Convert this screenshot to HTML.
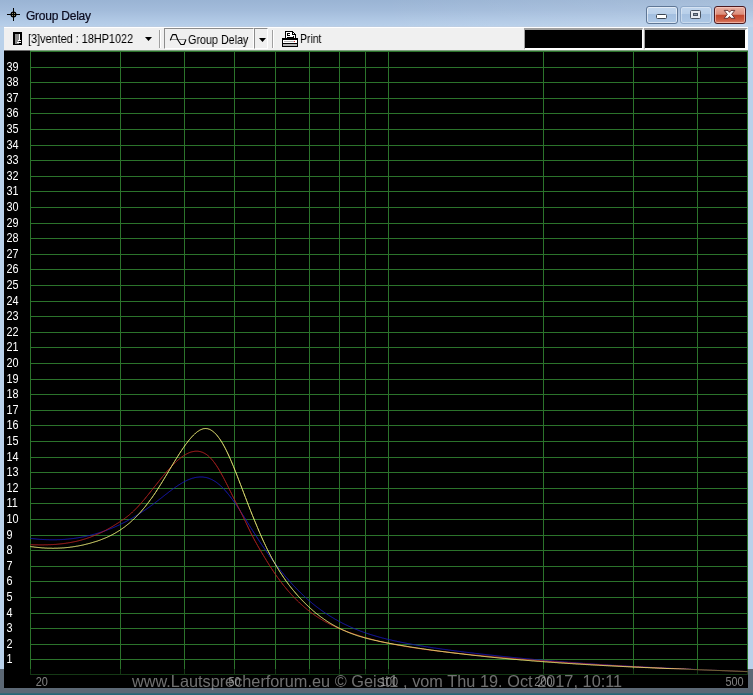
<!DOCTYPE html>
<html><head><meta charset="utf-8"><title>Group Delay</title>
<style>
html,body{margin:0;padding:0}
body{width:753px;height:695px;overflow:hidden;position:relative;background:#b9d1ea;font-family:"Liberation Sans",Arial,sans-serif}
.abs{position:absolute}
#chart,.tbt,#ttext,#wm{will-change:transform}
#title{left:0;top:0;width:753px;height:27px;background:linear-gradient(to bottom,#9ab4d4 0%,#a3bcdb 40%,#b2cae6 80%,#b8d0ea 100%)}
#titleglow{left:0;top:0;width:753px;height:27px;background:linear-gradient(to right,rgba(255,255,255,0) 0%,rgba(255,255,255,0.0) 50%,rgba(255,255,255,0.12) 100%)}
#ttext{left:26.2px;top:8.5px;font-size:12px;letter-spacing:-0.23px;line-height:14px;color:#0a0a1e;white-space:nowrap;-webkit-text-stroke:0.2px #0a0a1e}
#toolbar{left:4px;top:27px;width:744px;height:23px;background:#f0f0f0;border-top:1px solid #fff;box-sizing:border-box}
.tbt{font-size:12.4px;line-height:13px;color:#000;white-space:nowrap;transform:scaleX(0.877);transform-origin:left top}
.sepd{width:1px;height:18px;top:30px;background:#a0a0a0}
.sepl{width:1px;height:18px;top:30px;background:#fff}
.cb{top:6px;height:18px;box-sizing:border-box;border-radius:3px}
#band{left:0;top:669px;width:753px;height:26px;background:rgba(0,0,0,0.5)}
#teal{left:0;top:693px;width:753px;height:2px;background:linear-gradient(to bottom,#7ed2ee,#3cd0f0)}
#wm{left:131.5px;top:672px;font-size:16.28px;line-height:18px;color:rgba(170,170,170,0.66);white-space:nowrap;word-spacing:0.15px}
</style></head><body>
<div id="title" class="abs"></div><div class="abs" style="left:0;top:26px;width:753px;height:1px;background:#bccde3"></div><div id="titleglow" class="abs"></div>
<svg class="abs" style="left:6px;top:7px" width="16" height="16" viewBox="0 0 16 16"><g shape-rendering="crispEdges" fill="#000"><rect x="1" y="7" width="13" height="1"/><rect x="7" y="1" width="1" height="13"/></g><circle cx="7.5" cy="7.5" r="2.2" fill="none" stroke="#000" stroke-width="1.5"/><circle cx="7.5" cy="7.5" r="2.7" fill="#000"/><g fill="#b4ac80"><rect x="6.1" y="6.1" width="0.9" height="0.9"/><rect x="8" y="6.1" width="0.9" height="0.9"/><rect x="6.1" y="8" width="0.9" height="0.9"/><rect x="8" y="8" width="0.9" height="0.9"/></g></svg>
<div id="ttext" class="abs">Group Delay</div>
<!-- caption buttons -->
<div class="abs cb" style="left:646px;width:32px;border:1px solid #5f7796;background:linear-gradient(to bottom,#c3d7ee 0%,#bbd1ea 43%,#a3bfe0 47%,#adc7e5 100%);box-shadow:inset 0 0 0 1px rgba(255,255,255,0.55)"></div>
<div class="abs" style="left:656px;top:14px;width:11px;height:5px;box-sizing:border-box;border:1px solid #3c4652;background:#fff;border-radius:1.5px"></div>
<div class="abs cb" style="left:680px;width:32px;border:1px solid #8fa9c9;background:linear-gradient(to bottom,#c0d5ed 0%,#b8cfe9 43%,#a6c1e1 47%,#aec8e5 100%);box-shadow:inset 0 0 0 1px rgba(255,255,255,0.35)"></div>
<div class="abs" style="left:690px;top:10px;width:11px;height:9px;box-sizing:border-box;border:1px solid #4a5462;background:#e9ecf1;border-radius:1.5px"></div>
<div class="abs" style="left:693px;top:13px;width:5px;height:3px;box-sizing:border-box;border:1px solid #4a5462;background:#8d98a6"></div>
<div class="abs cb" style="left:714px;width:32px;border:1px solid #4b1a20;background:linear-gradient(to bottom,#e9b0a3 0%,#dc8e7b 46%,#c1442a 50%,#cc5a40 80%,#d9806a 100%);box-shadow:inset 0 0 0 1px rgba(255,210,200,0.6)"></div>
<svg class="abs" style="left:722px;top:8px" width="15" height="13" viewBox="0 0 15 13"><path d="M2.2 2.4 L6.0 2.4 L7.5 4.3 L9.0 2.4 L12.8 2.4 L9.7 6.3 L12.9 10.3 L9.0 10.3 L7.5 8.4 L6.0 10.3 L2.1 10.3 L5.3 6.3 Z" fill="#fff" stroke="#5a2a2a" stroke-width="0.9" stroke-linejoin="round"/></svg>
<!-- toolbar -->
<div id="toolbar" class="abs"></div>
<svg class="abs" style="left:13px;top:32px" width="9" height="13" viewBox="0 0 9 13" shape-rendering="crispEdges"><rect width="9" height="13" fill="#000"/><rect x="1.5" y="1.5" width="4" height="10" fill="#8a8a8a"/><rect x="6" y="1.5" width="1" height="7" fill="#fff"/><rect x="5" y="8" width="3" height="1" fill="#fff"/><rect x="4" y="10" width="4" height="1" fill="#fff"/></svg>
<div class="abs tbt" style="left:28.3px;top:33px" id="t1">[3]vented : 18HP1022</div>
<svg class="abs" style="left:145px;top:37px" width="7" height="4" viewBox="0 0 7 4"><path d="M0 0 H7 L3.5 4 Z" fill="#000"/></svg>
<div class="abs sepd" style="left:159px"></div><div class="abs sepl" style="left:160px"></div>
<!-- pressed button -->
<div class="abs" style="left:164px;top:28px;width:90px;height:21px;box-sizing:border-box;border-left:1px solid #8c8c8c;border-top:1px solid #8c8c8c;border-right:1px solid #fff;border-bottom:1px solid #fff"></div>
<div class="abs" style="left:254px;top:28px;width:14px;height:21px;box-sizing:border-box;border-left:1px solid #8c8c8c;border-top:1px solid #8c8c8c;border-right:1px solid #fff;border-bottom:1px solid #fff"></div>
<svg class="abs" style="left:169px;top:32px" width="19" height="15" viewBox="169 32 19 15"><rect x="170" y="39" width="16" height="1" fill="#8c8c8c" shape-rendering="crispEdges"/><path d="M170.4 40 L172.6 34.6 L176 34.6 L177.6 39.5 L180.9 44.5 L184 44.5 L185.8 40" fill="none" stroke="#000" stroke-width="1.1" stroke-linejoin="round" stroke-linecap="round"/></svg>
<div class="abs tbt" style="left:187.5px;top:34px;transform:scaleX(0.868)" id="t2">Group Delay</div>
<svg class="abs" style="left:259px;top:38px" width="7" height="4" viewBox="0 0 7 4"><path d="M0 0 H7 L3.5 4 Z" fill="#000"/></svg>
<div class="abs sepd" style="left:272px"></div><div class="abs sepl" style="left:273px"></div>
<!-- printer -->
<svg class="abs" style="left:282px;top:31px" width="16" height="16" viewBox="0 0 16 16" shape-rendering="crispEdges"><path d="M3.5 7.5 V0.5 H10.5 L13.5 3.5 V7.5" fill="#fff" stroke="#000"/><rect x="10" y="1" width="1" height="3" fill="#000"/><rect x="10" y="3" width="3" height="1" fill="#000"/><rect x="5" y="2" width="3" height="1" fill="#000"/><rect x="5" y="3" width="1" height="1" fill="#000"/><rect x="5" y="4" width="3" height="1" fill="#000"/><rect x="5" y="6" width="7" height="1" fill="#000"/><rect x="11" y="5" width="1" height="1" fill="#000"/><rect x="0.5" y="7.5" width="15" height="8" fill="#fff" stroke="#000"/><rect x="1" y="8" width="14" height="1" fill="#000"/><rect x="2" y="10" width="10" height="1" fill="#b8b8b8"/><rect x="12" y="10" width="1" height="1" fill="#e03030"/><rect x="1" y="13" width="14" height="2" fill="#b4b4b4"/><rect x="1" y="12" width="14" height="1" fill="#000"/></svg>
<div class="abs tbt" style="left:300px;top:33px;transform:scaleX(0.84)" id="t3">Print</div>
<!-- black status boxes -->
<div class="abs" style="left:524px;top:28px;width:119px;height:22px;box-sizing:border-box;background:#000;border-left:1px solid #a0a0a0;border-top:2px solid #a0a0a0;border-right:1px solid #fff;border-bottom:2px solid #fff"></div>
<div class="abs" style="left:644px;top:28px;width:104px;height:22px;box-sizing:border-box;background:#000;border-left:1px solid #a0a0a0;border-top:2px solid #a0a0a0;border-right:3px solid #fff;border-bottom:2px solid #fff"></div>
<svg id="chart" width="744" height="638" viewBox="4 50 744 638" style="position:absolute;left:4px;top:50px">
<rect x="4" y="50" width="744" height="638" fill="#000"/>
<g shape-rendering="crispEdges" stroke="#2b732b" stroke-width="1">
<line x1="30" x2="748" y1="674.5" y2="674.5"/>
<line x1="30" x2="748" y1="659.5" y2="659.5"/>
<line x1="30" x2="748" y1="644.5" y2="644.5"/>
<line x1="30" x2="748" y1="628.5" y2="628.5"/>
<line x1="30" x2="748" y1="613.5" y2="613.5"/>
<line x1="30" x2="748" y1="597.5" y2="597.5"/>
<line x1="30" x2="748" y1="581.5" y2="581.5"/>
<line x1="30" x2="748" y1="566.5" y2="566.5"/>
<line x1="30" x2="748" y1="550.5" y2="550.5"/>
<line x1="30" x2="748" y1="535.5" y2="535.5"/>
<line x1="30" x2="748" y1="519.5" y2="519.5"/>
<line x1="30" x2="748" y1="503.5" y2="503.5"/>
<line x1="30" x2="748" y1="488.5" y2="488.5"/>
<line x1="30" x2="748" y1="472.5" y2="472.5"/>
<line x1="30" x2="748" y1="457.5" y2="457.5"/>
<line x1="30" x2="748" y1="441.5" y2="441.5"/>
<line x1="30" x2="748" y1="425.5" y2="425.5"/>
<line x1="30" x2="748" y1="410.5" y2="410.5"/>
<line x1="30" x2="748" y1="394.5" y2="394.5"/>
<line x1="30" x2="748" y1="379.5" y2="379.5"/>
<line x1="30" x2="748" y1="363.5" y2="363.5"/>
<line x1="30" x2="748" y1="347.5" y2="347.5"/>
<line x1="30" x2="748" y1="332.5" y2="332.5"/>
<line x1="30" x2="748" y1="316.5" y2="316.5"/>
<line x1="30" x2="748" y1="301.5" y2="301.5"/>
<line x1="30" x2="748" y1="285.5" y2="285.5"/>
<line x1="30" x2="748" y1="269.5" y2="269.5"/>
<line x1="30" x2="748" y1="254.5" y2="254.5"/>
<line x1="30" x2="748" y1="238.5" y2="238.5"/>
<line x1="30" x2="748" y1="223.5" y2="223.5"/>
<line x1="30" x2="748" y1="207.5" y2="207.5"/>
<line x1="30" x2="748" y1="191.5" y2="191.5"/>
<line x1="30" x2="748" y1="176.5" y2="176.5"/>
<line x1="30" x2="748" y1="160.5" y2="160.5"/>
<line x1="30" x2="748" y1="145.5" y2="145.5"/>
<line x1="30" x2="748" y1="129.5" y2="129.5"/>
<line x1="30" x2="748" y1="113.5" y2="113.5"/>
<line x1="30" x2="748" y1="98.5" y2="98.5"/>
<line x1="30" x2="748" y1="82.5" y2="82.5"/>
<line x1="30" x2="748" y1="67.5" y2="67.5"/>
<line x1="30" x2="748" y1="51.5" y2="51.5"/>
<line y1="51" y2="675" x1="30.5" x2="30.5"/>
<line y1="51" y2="675" x1="120.5" x2="120.5"/>
<line y1="51" y2="675" x1="184.5" x2="184.5"/>
<line y1="51" y2="675" x1="234.5" x2="234.5"/>
<line y1="51" y2="675" x1="275.5" x2="275.5"/>
<line y1="51" y2="675" x1="309.5" x2="309.5"/>
<line y1="51" y2="675" x1="339.5" x2="339.5"/>
<line y1="51" y2="675" x1="365.5" x2="365.5"/>
<line y1="51" y2="675" x1="388.5" x2="388.5"/>
<line y1="51" y2="675" x1="543.5" x2="543.5"/>
<line y1="51" y2="675" x1="633.5" x2="633.5"/>
<line y1="51" y2="675" x1="697.5" x2="697.5"/>
<line y1="51" y2="675" x1="747.5" x2="747.5"/>
</g>
<rect x="4" y="50" width="26" height="1" fill="#6e6e6e"/><rect x="30" y="50" width="718" height="1" fill="#7fa27f"/>
<path d="M30.5 538.4 L31.5 538.5 L32.5 538.6 L33.5 538.7 L34.5 538.8 L35.5 538.9 L36.5 539.0 L37.5 539.1 L38.5 539.2 L39.5 539.3 L40.5 539.4 L41.5 539.4 L42.5 539.5 L43.5 539.5 L44.5 539.6 L45.5 539.6 L46.5 539.7 L47.5 539.7 L48.5 539.7 L49.5 539.8 L50.5 539.8 L51.5 539.8 L52.5 539.8 L53.5 539.8 L54.5 539.8 L55.5 539.8 L56.5 539.8 L57.5 539.7 L58.5 539.7 L59.5 539.7 L60.5 539.6 L61.5 539.6 L62.5 539.5 L63.5 539.4 L64.5 539.4 L65.5 539.3 L66.5 539.2 L67.5 539.1 L68.5 539.0 L69.5 538.9 L70.5 538.8 L71.5 538.7 L72.5 538.6 L73.5 538.5 L74.5 538.3 L75.5 538.2 L76.5 538.0 L77.5 537.9 L78.5 537.7 L79.5 537.5 L80.5 537.4 L81.5 537.2 L82.5 537.0 L83.5 536.8 L84.5 536.6 L85.5 536.4 L86.5 536.2 L87.5 535.9 L88.5 535.7 L89.5 535.5 L90.5 535.2 L91.5 535.0 L92.5 534.7 L93.5 534.4 L94.5 534.2 L95.5 533.9 L96.5 533.6 L97.5 533.3 L98.5 533.0 L99.5 532.7 L100.5 532.3 L101.5 532.0 L102.5 531.7 L103.5 531.3 L104.5 531.0 L105.5 530.6 L106.5 530.3 L107.5 529.9 L108.5 529.5 L109.5 529.1 L110.5 528.7 L111.5 528.3 L112.5 527.9 L113.5 527.5 L114.5 527.1 L115.5 526.6 L116.5 526.2 L117.5 525.7 L118.5 525.3 L119.5 524.8 L120.5 524.3 L121.5 523.8 L122.5 523.3 L123.5 522.8 L124.5 522.3 L125.5 521.8 L126.5 521.3 L127.5 520.7 L128.5 520.2 L129.5 519.6 L130.5 519.1 L131.5 518.5 L132.5 517.9 L133.5 517.3 L134.5 516.7 L135.5 516.1 L136.5 515.5 L137.5 514.9 L138.5 514.3 L139.5 513.7 L140.5 513.0 L141.5 512.4 L142.5 511.7 L143.5 511.0 L144.5 510.4 L145.5 509.7 L146.5 509.0 L147.5 508.3 L148.5 507.6 L149.5 506.9 L150.5 506.1 L151.5 505.4 L152.5 504.7 L153.5 503.9 L154.5 503.2 L155.5 502.4 L156.5 501.7 L157.5 500.9 L158.5 500.1 L159.5 499.3 L160.5 498.6 L161.5 497.8 L162.5 497.0 L163.5 496.2 L164.5 495.4 L165.5 494.6 L166.5 493.9 L167.5 493.1 L168.5 492.3 L169.5 491.5 L170.5 490.8 L171.5 490.0 L172.5 489.3 L173.5 488.6 L174.5 487.9 L175.5 487.2 L176.5 486.5 L177.5 485.8 L178.5 485.1 L179.5 484.5 L180.5 483.9 L181.5 483.3 L182.5 482.7 L183.5 482.1 L184.5 481.6 L185.5 481.1 L186.5 480.6 L187.5 480.1 L188.5 479.7 L189.5 479.3 L190.5 478.9 L191.5 478.6 L192.5 478.2 L193.5 478.0 L194.5 477.7 L195.5 477.5 L196.5 477.3 L197.5 477.2 L198.5 477.1 L199.5 477.0 L200.5 477.0 L201.5 477.0 L202.5 477.0 L203.5 477.1 L204.5 477.3 L205.5 477.4 L206.5 477.6 L207.5 477.9 L208.5 478.2 L209.5 478.6 L210.5 479.0 L211.5 479.4 L212.5 479.9 L213.5 480.5 L214.5 481.1 L215.5 481.7 L216.5 482.4 L217.5 483.2 L218.5 484.0 L219.5 484.8 L220.5 485.7 L221.5 486.7 L222.5 487.7 L223.5 488.7 L224.5 489.8 L225.5 490.9 L226.5 492.0 L227.5 493.2 L228.5 494.4 L229.5 495.7 L230.5 496.9 L231.5 498.3 L232.5 499.6 L233.5 501.0 L234.5 502.4 L235.5 503.8 L236.5 505.3 L237.5 506.8 L238.5 508.3 L239.5 509.8 L240.5 511.3 L241.5 512.9 L242.5 514.5 L243.5 516.0 L244.5 517.6 L245.5 519.2 L246.5 520.8 L247.5 522.4 L248.5 524.1 L249.5 525.7 L250.5 527.3 L251.5 528.8 L252.5 530.4 L253.5 532.0 L254.5 533.6 L255.5 535.1 L256.5 536.7 L257.5 538.2 L258.5 539.8 L259.5 541.3 L260.5 542.8 L261.5 544.3 L262.5 545.8 L263.5 547.2 L264.5 548.7 L265.5 550.2 L266.5 551.6 L267.5 553.0 L268.5 554.5 L269.5 555.9 L270.5 557.3 L271.5 558.6 L272.5 560.0 L273.5 561.4 L274.5 562.7 L275.5 564.0 L276.5 565.3 L277.5 566.6 L278.5 567.9 L279.5 569.2 L280.5 570.4 L281.5 571.7 L282.5 572.9 L283.5 574.1 L284.5 575.3 L285.5 576.5 L286.5 577.7 L287.5 578.8 L288.5 580.0 L289.5 581.1 L290.5 582.2 L291.5 583.3 L292.5 584.4 L293.5 585.5 L294.5 586.6 L295.5 587.6 L296.5 588.7 L297.5 589.7 L298.5 590.7 L299.5 591.7 L300.5 592.7 L301.5 593.6 L302.5 594.6 L303.5 595.5 L304.5 596.5 L305.5 597.4 L306.5 598.3 L307.5 599.2 L308.5 600.1 L309.5 600.9 L310.5 601.8 L311.5 602.6 L312.5 603.5 L313.5 604.3 L314.5 605.1 L315.5 605.9 L316.5 606.7 L317.5 607.4 L318.5 608.2 L319.5 608.9 L320.5 609.7 L321.5 610.4 L322.5 611.1 L323.5 611.8 L324.5 612.5 L325.5 613.2 L326.5 613.8 L327.5 614.5 L328.5 615.1 L329.5 615.8 L330.5 616.4 L331.5 617.0 L332.5 617.6 L333.5 618.2 L334.5 618.8 L335.5 619.4 L336.5 619.9 L337.5 620.5 L338.5 621.1 L339.5 621.6 L340.5 622.1 L341.5 622.6 L342.5 623.2 L343.5 623.7 L344.5 624.2 L345.5 624.7 L346.5 625.1 L347.5 625.6 L348.5 626.1 L349.5 626.5 L350.5 627.0 L351.5 627.4 L352.5 627.8 L353.5 628.3 L354.5 628.7 L355.5 629.1 L356.5 629.5 L357.5 629.9 L358.5 630.3 L359.5 630.7 L360.5 631.1 L361.5 631.4 L362.5 631.8 L363.5 632.2 L364.5 632.5 L365.5 632.9 L366.5 633.2 L367.5 633.5 L368.5 633.9 L369.5 634.2 L370.5 634.5 L371.5 634.8 L372.5 635.1 L373.5 635.4 L374.5 635.7 L375.5 636.0 L376.5 636.3 L377.5 636.6 L378.5 636.9 L379.5 637.2 L380.5 637.4 L381.5 637.7 L382.5 638.0 L383.5 638.2 L384.5 638.5 L385.5 638.7 L386.5 639.0 L387.5 639.2 L388.5 639.4 L389.5 639.7 L390.5 639.9 L391.5 640.1 L392.5 640.4 L393.5 640.6 L394.5 640.8 L395.5 641.0 L396.5 641.2 L397.5 641.5 L398.5 641.7 L399.5 641.9 L400.5 642.1 L401.5 642.3 L402.5 642.5 L403.5 642.7 L404.5 642.9 L405.5 643.1 L406.5 643.3 L407.5 643.5 L408.5 643.7 L409.5 643.8 L410.5 644.0 L411.5 644.2 L412.5 644.4 L413.5 644.6 L414.5 644.8 L415.5 644.9 L416.5 645.1 L417.5 645.3 L418.5 645.5 L419.5 645.6 L420.5 645.8 L421.5 646.0 L422.5 646.1 L423.5 646.3 L424.5 646.5 L425.5 646.6 L426.5 646.8 L427.5 646.9 L428.5 647.1 L429.5 647.2 L430.5 647.4 L431.5 647.6 L432.5 647.7 L433.5 647.9 L434.5 648.0 L435.5 648.1 L436.5 648.3 L437.5 648.4 L438.5 648.6 L439.5 648.7 L440.5 648.9 L441.5 649.0 L442.5 649.2 L443.5 649.3 L444.5 649.4 L445.5 649.6 L446.5 649.7 L447.5 649.8 L448.5 650.0 L449.5 650.1 L450.5 650.2 L451.5 650.4 L452.5 650.5 L453.5 650.6 L454.5 650.8 L455.5 650.9 L456.5 651.0 L457.5 651.2 L458.5 651.3 L459.5 651.4 L460.5 651.5 L461.5 651.7 L462.5 651.8 L463.5 651.9 L464.5 652.1 L465.5 652.2 L466.5 652.3 L467.5 652.4 L468.5 652.5 L469.5 652.7 L470.5 652.8 L471.5 652.9 L472.5 653.0 L473.5 653.1 L474.5 653.3 L475.5 653.4 L476.5 653.5 L477.5 653.6 L478.5 653.7 L479.5 653.9 L480.5 654.0 L481.5 654.1 L482.5 654.2 L483.5 654.3 L484.5 654.4 L485.5 654.5 L486.5 654.7 L487.5 654.8 L488.5 654.9 L489.5 655.0 L490.5 655.1 L491.5 655.2 L492.5 655.3 L493.5 655.4 L494.5 655.5 L495.5 655.6 L496.5 655.8 L497.5 655.9 L498.5 656.0 L499.5 656.1 L500.5 656.2 L501.5 656.3 L502.5 656.4 L503.5 656.5 L504.5 656.6 L505.5 656.7 L506.5 656.8 L507.5 656.9 L508.5 657.0 L509.5 657.1 L510.5 657.2 L511.5 657.3 L512.5 657.4 L513.5 657.5 L514.5 657.6 L515.5 657.7 L516.5 657.8 L517.5 657.9 L518.5 658.0 L519.5 658.1 L520.5 658.2 L521.5 658.3 L522.5 658.4 L523.5 658.5 L524.5 658.6 L525.5 658.7 L526.5 658.8 L527.5 658.8 L528.5 658.9 L529.5 659.0 L530.5 659.1 L531.5 659.2 L532.5 659.3 L533.5 659.4 L534.5 659.5 L535.5 659.6 L536.5 659.7 L537.5 659.7 L538.5 659.8 L539.5 659.9 L540.5 660.0 L541.5 660.1 L542.5 660.2 L543.5 660.3 L544.5 660.4 L545.5 660.4 L546.5 660.5 L547.5 660.6 L548.5 660.7 L549.5 660.8 L550.5 660.9 L551.5 660.9 L552.5 661.0 L553.5 661.1 L554.5 661.2 L555.5 661.3 L556.5 661.3 L557.5 661.4 L558.5 661.5 L559.5 661.6 L560.5 661.7 L561.5 661.7 L562.5 661.8 L563.5 661.9 L564.5 662.0 L565.5 662.0 L566.5 662.1 L567.5 662.2 L568.5 662.3 L569.5 662.3 L570.5 662.4 L571.5 662.5 L572.5 662.6 L573.5 662.6 L574.5 662.7 L575.5 662.8 L576.5 662.9 L577.5 662.9 L578.5 663.0 L579.5 663.1 L580.5 663.1 L581.5 663.2 L582.5 663.3 L583.5 663.4 L584.5 663.4 L585.5 663.5 L586.5 663.6 L587.5 663.6 L588.5 663.7 L589.5 663.8 L590.5 663.8 L591.5 663.9 L592.5 664.0 L593.5 664.0 L594.5 664.1 L595.5 664.2 L596.5 664.2 L597.5 664.3 L598.5 664.4 L599.5 664.4 L600.5 664.5 L601.5 664.6 L602.5 664.6 L603.5 664.7 L604.5 664.8 L605.5 664.8 L606.5 664.9 L607.5 664.9 L608.5 665.0 L609.5 665.1 L610.5 665.1 L611.5 665.2 L612.5 665.3 L613.5 665.3 L614.5 665.4 L615.5 665.4 L616.5 665.5 L617.5 665.6 L618.5 665.6 L619.5 665.7 L620.5 665.7 L621.5 665.8 L622.5 665.8 L623.5 665.9 L624.5 666.0 L625.5 666.0 L626.5 666.1 L627.5 666.1 L628.5 666.2 L629.5 666.2 L630.5 666.3 L631.5 666.4 L632.5 666.4 L633.5 666.5 L634.5 666.5 L635.5 666.6 L636.5 666.6 L637.5 666.7 L638.5 666.7 L639.5 666.8 L640.5 666.8 L641.5 666.9 L642.5 666.9 L643.5 667.0 L644.5 667.1 L645.5 667.1 L646.5 667.2 L647.5 667.2 L648.5 667.3 L649.5 667.3 L650.5 667.4 L651.5 667.4 L652.5 667.5 L653.5 667.5 L654.5 667.6 L655.5 667.6 L656.5 667.7 L657.5 667.7 L658.5 667.8 L659.5 667.8 L660.5 667.9 L661.5 667.9 L662.5 668.0 L663.5 668.0 L664.5 668.1 L665.5 668.1 L666.5 668.1 L667.5 668.2 L668.5 668.2 L669.5 668.3 L670.5 668.3 L671.5 668.4 L672.5 668.4 L673.5 668.5 L674.5 668.5 L675.5 668.6 L676.5 668.6 L677.5 668.7 L678.5 668.7 L679.5 668.8 L680.5 668.8 L681.5 668.8 L682.5 668.9 L683.5 668.9 L684.5 669.0 L685.5 669.0 L686.5 669.1 L687.5 669.1 L688.5 669.2 L689.5 669.2 L690.5 669.2 L691.5 669.3 L692.5 669.3 L693.5 669.4 L694.5 669.4 L695.5 669.5 L696.5 669.5 L697.5 669.5 L698.5 669.6 L699.5 669.6 L700.5 669.7 L701.5 669.7 L702.5 669.8 L703.5 669.8 L704.5 669.8 L705.5 669.9 L706.5 669.9 L707.5 670.0 L708.5 670.0 L709.5 670.0 L710.5 670.1 L711.5 670.1 L712.5 670.2 L713.5 670.2 L714.5 670.3 L715.5 670.3 L716.5 670.3 L717.5 670.4 L718.5 670.4 L719.5 670.5 L720.5 670.5 L721.5 670.5 L722.5 670.6 L723.5 670.6 L724.5 670.7 L725.5 670.7 L726.5 670.7 L727.5 670.8 L728.5 670.8 L729.5 670.9 L730.5 670.9 L731.5 670.9 L732.5 671.0 L733.5 671.0 L734.5 671.0 L735.5 671.1 L736.5 671.1 L737.5 671.2 L738.5 671.2 L739.5 671.2 L740.5 671.3 L741.5 671.3 L742.5 671.4 L743.5 671.4 L744.5 671.4 L745.5 671.5 L746.5 671.5 L747.5 671.6" fill="none" stroke="#1818b8" stroke-width="1"/>
<path d="M30.5 544.7 L31.5 544.7 L32.5 544.7 L33.5 544.8 L34.5 544.8 L35.5 544.8 L36.5 544.8 L37.5 544.8 L38.5 544.9 L39.5 544.9 L40.5 544.9 L41.5 544.9 L42.5 544.9 L43.5 544.9 L44.5 544.8 L45.5 544.8 L46.5 544.8 L47.5 544.8 L48.5 544.7 L49.5 544.7 L50.5 544.7 L51.5 544.6 L52.5 544.6 L53.5 544.5 L54.5 544.4 L55.5 544.4 L56.5 544.3 L57.5 544.2 L58.5 544.1 L59.5 544.0 L60.5 543.9 L61.5 543.8 L62.5 543.7 L63.5 543.6 L64.5 543.4 L65.5 543.3 L66.5 543.1 L67.5 543.0 L68.5 542.8 L69.5 542.7 L70.5 542.5 L71.5 542.3 L72.5 542.1 L73.5 541.9 L74.5 541.7 L75.5 541.5 L76.5 541.3 L77.5 541.0 L78.5 540.8 L79.5 540.5 L80.5 540.3 L81.5 540.0 L82.5 539.7 L83.5 539.4 L84.5 539.1 L85.5 538.8 L86.5 538.5 L87.5 538.1 L88.5 537.8 L89.5 537.4 L90.5 537.1 L91.5 536.7 L92.5 536.3 L93.5 535.9 L94.5 535.5 L95.5 535.1 L96.5 534.7 L97.5 534.2 L98.5 533.8 L99.5 533.3 L100.5 532.9 L101.5 532.4 L102.5 531.9 L103.5 531.4 L104.5 530.9 L105.5 530.4 L106.5 529.8 L107.5 529.3 L108.5 528.7 L109.5 528.2 L110.5 527.6 L111.5 527.0 L112.5 526.4 L113.5 525.8 L114.5 525.2 L115.5 524.6 L116.5 523.9 L117.5 523.3 L118.5 522.7 L119.5 522.0 L120.5 521.3 L121.5 520.6 L122.5 520.0 L123.5 519.3 L124.5 518.5 L125.5 517.8 L126.5 517.1 L127.5 516.3 L128.5 515.5 L129.5 514.7 L130.5 513.8 L131.5 513.0 L132.5 512.0 L133.5 511.1 L134.5 510.1 L135.5 509.1 L136.5 508.1 L137.5 507.1 L138.5 506.0 L139.5 504.9 L140.5 503.8 L141.5 502.7 L142.5 501.5 L143.5 500.3 L144.5 499.2 L145.5 498.0 L146.5 496.7 L147.5 495.5 L148.5 494.3 L149.5 493.0 L150.5 491.8 L151.5 490.5 L152.5 489.3 L153.5 488.0 L154.5 486.7 L155.5 485.5 L156.5 484.2 L157.5 483.0 L158.5 481.7 L159.5 480.4 L160.5 479.2 L161.5 478.0 L162.5 476.7 L163.5 475.5 L164.5 474.3 L165.5 473.1 L166.5 472.0 L167.5 470.8 L168.5 469.7 L169.5 468.6 L170.5 467.5 L171.5 466.4 L172.5 465.3 L173.5 464.3 L174.5 463.3 L175.5 462.4 L176.5 461.4 L177.5 460.5 L178.5 459.6 L179.5 458.8 L180.5 458.0 L181.5 457.2 L182.5 456.5 L183.5 455.8 L184.5 455.2 L185.5 454.6 L186.5 454.0 L187.5 453.5 L188.5 453.0 L189.5 452.6 L190.5 452.2 L191.5 451.9 L192.5 451.7 L193.5 451.5 L194.5 451.3 L195.5 451.2 L196.5 451.2 L197.5 451.2 L198.5 451.3 L199.5 451.5 L200.5 451.7 L201.5 452.0 L202.5 452.3 L203.5 452.8 L204.5 453.3 L205.5 453.9 L206.5 454.5 L207.5 455.3 L208.5 456.1 L209.5 457.0 L210.5 458.0 L211.5 459.1 L212.5 460.2 L213.5 461.5 L214.5 462.8 L215.5 464.2 L216.5 465.7 L217.5 467.2 L218.5 468.9 L219.5 470.5 L220.5 472.3 L221.5 474.1 L222.5 475.9 L223.5 477.7 L224.5 479.7 L225.5 481.6 L226.5 483.6 L227.5 485.5 L228.5 487.6 L229.5 489.6 L230.5 491.6 L231.5 493.6 L232.5 495.7 L233.5 497.7 L234.5 499.7 L235.5 501.7 L236.5 503.7 L237.5 505.7 L238.5 507.7 L239.5 509.6 L240.5 511.6 L241.5 513.6 L242.5 515.6 L243.5 517.6 L244.5 519.6 L245.5 521.7 L246.5 523.8 L247.5 525.9 L248.5 528.1 L249.5 530.1 L250.5 532.2 L251.5 534.2 L252.5 536.2 L253.5 538.1 L254.5 540.0 L255.5 541.8 L256.5 543.6 L257.5 545.4 L258.5 547.2 L259.5 548.9 L260.5 550.6 L261.5 552.3 L262.5 554.0 L263.5 555.6 L264.5 557.3 L265.5 558.9 L266.5 560.6 L267.5 562.2 L268.5 563.8 L269.5 565.4 L270.5 566.9 L271.5 568.5 L272.5 570.0 L273.5 571.5 L274.5 573.0 L275.5 574.4 L276.5 575.9 L277.5 577.3 L278.5 578.7 L279.5 580.0 L280.5 581.4 L281.5 582.7 L282.5 584.0 L283.5 585.3 L284.5 586.5 L285.5 587.7 L286.5 589.0 L287.5 590.1 L288.5 591.3 L289.5 592.4 L290.5 593.6 L291.5 594.7 L292.5 595.8 L293.5 596.8 L294.5 597.9 L295.5 598.9 L296.5 599.9 L297.5 600.9 L298.5 601.8 L299.5 602.8 L300.5 603.7 L301.5 604.6 L302.5 605.5 L303.5 606.4 L304.5 607.3 L305.5 608.1 L306.5 608.9 L307.5 609.8 L308.5 610.5 L309.5 611.3 L310.5 612.1 L311.5 612.8 L312.5 613.6 L313.5 614.3 L314.5 615.0 L315.5 615.7 L316.5 616.4 L317.5 617.0 L318.5 617.7 L319.5 618.3 L320.5 618.9 L321.5 619.5 L322.5 620.1 L323.5 620.7 L324.5 621.3 L325.5 621.9 L326.5 622.4 L327.5 622.9 L328.5 623.5 L329.5 624.0 L330.5 624.5 L331.5 625.0 L332.5 625.5 L333.5 625.9 L334.5 626.4 L335.5 626.9 L336.5 627.3 L337.5 627.8 L338.5 628.2 L339.5 628.6 L340.5 629.0 L341.5 629.4 L342.5 629.8 L343.5 630.2 L344.5 630.6 L345.5 631.0 L346.5 631.4 L347.5 631.7 L348.5 632.1 L349.5 632.5 L350.5 632.8 L351.5 633.1 L352.5 633.5 L353.5 633.8 L354.5 634.2 L355.5 634.5 L356.5 634.8 L357.5 635.1 L358.5 635.4 L359.5 635.8 L360.5 636.1 L361.5 636.4 L362.5 636.7 L363.5 637.0 L364.5 637.3 L365.5 637.5 L366.5 637.8 L367.5 638.1 L368.5 638.4 L369.5 638.7 L370.5 638.9 L371.5 639.2 L372.5 639.5 L373.5 639.7 L374.5 640.0 L375.5 640.2 L376.5 640.5 L377.5 640.7 L378.5 641.0 L379.5 641.2 L380.5 641.5 L381.5 641.7 L382.5 641.9 L383.5 642.1 L384.5 642.4 L385.5 642.6 L386.5 642.8 L387.5 643.0 L388.5 643.3 L389.5 643.5 L390.5 643.7 L391.5 643.9 L392.5 644.1 L393.5 644.3 L394.5 644.5 L395.5 644.7 L396.5 644.9 L397.5 645.1 L398.5 645.2 L399.5 645.4 L400.5 645.6 L401.5 645.8 L402.5 646.0 L403.5 646.1 L404.5 646.3 L405.5 646.5 L406.5 646.7 L407.5 646.8 L408.5 647.0 L409.5 647.2 L410.5 647.3 L411.5 647.5 L412.5 647.6 L413.5 647.8 L414.5 647.9 L415.5 648.1 L416.5 648.2 L417.5 648.4 L418.5 648.5 L419.5 648.7 L420.5 648.8 L421.5 649.0 L422.5 649.1 L423.5 649.2 L424.5 649.4 L425.5 649.5 L426.5 649.6 L427.5 649.8 L428.5 649.9 L429.5 650.0 L430.5 650.2 L431.5 650.3 L432.5 650.4 L433.5 650.5 L434.5 650.7 L435.5 650.8 L436.5 650.9 L437.5 651.0 L438.5 651.1 L439.5 651.3 L440.5 651.4 L441.5 651.5 L442.5 651.6 L443.5 651.7 L444.5 651.8 L445.5 651.9 L446.5 652.0 L447.5 652.2 L448.5 652.3 L449.5 652.4 L450.5 652.5 L451.5 652.6 L452.5 652.7 L453.5 652.8 L454.5 652.9 L455.5 653.0 L456.5 653.1 L457.5 653.2 L458.5 653.3 L459.5 653.4 L460.5 653.5 L461.5 653.6 L462.5 653.7 L463.5 653.8 L464.5 654.0 L465.5 654.1 L466.5 654.2 L467.5 654.3 L468.5 654.4 L469.5 654.5 L470.5 654.6 L471.5 654.7 L472.5 654.8 L473.5 654.9 L474.5 655.0 L475.5 655.1 L476.5 655.2 L477.5 655.2 L478.5 655.3 L479.5 655.4 L480.5 655.5 L481.5 655.6 L482.5 655.7 L483.5 655.8 L484.5 655.9 L485.5 656.0 L486.5 656.1 L487.5 656.2 L488.5 656.3 L489.5 656.4 L490.5 656.5 L491.5 656.6 L492.5 656.7 L493.5 656.8 L494.5 656.9 L495.5 656.9 L496.5 657.0 L497.5 657.1 L498.5 657.2 L499.5 657.3 L500.5 657.4 L501.5 657.5 L502.5 657.6 L503.5 657.7 L504.5 657.8 L505.5 657.8 L506.5 657.9 L507.5 658.0 L508.5 658.1 L509.5 658.2 L510.5 658.3 L511.5 658.4 L512.5 658.4 L513.5 658.5 L514.5 658.6 L515.5 658.7 L516.5 658.8 L517.5 658.9 L518.5 659.0 L519.5 659.0 L520.5 659.1 L521.5 659.2 L522.5 659.3 L523.5 659.4 L524.5 659.5 L525.5 659.5 L526.5 659.6 L527.5 659.7 L528.5 659.8 L529.5 659.9 L530.5 659.9 L531.5 660.0 L532.5 660.1 L533.5 660.2 L534.5 660.3 L535.5 660.3 L536.5 660.4 L537.5 660.5 L538.5 660.6 L539.5 660.6 L540.5 660.7 L541.5 660.8 L542.5 660.9 L543.5 660.9 L544.5 661.0 L545.5 661.1 L546.5 661.2 L547.5 661.2 L548.5 661.3 L549.5 661.4 L550.5 661.5 L551.5 661.5 L552.5 661.6 L553.5 661.7 L554.5 661.8 L555.5 661.8 L556.5 661.9 L557.5 662.0 L558.5 662.1 L559.5 662.1 L560.5 662.2 L561.5 662.3 L562.5 662.3 L563.5 662.4 L564.5 662.5 L565.5 662.5 L566.5 662.6 L567.5 662.7 L568.5 662.8 L569.5 662.8 L570.5 662.9 L571.5 663.0 L572.5 663.0 L573.5 663.1 L574.5 663.2 L575.5 663.2 L576.5 663.3 L577.5 663.4 L578.5 663.4 L579.5 663.5 L580.5 663.6 L581.5 663.6 L582.5 663.7 L583.5 663.8 L584.5 663.8 L585.5 663.9 L586.5 663.9 L587.5 664.0 L588.5 664.1 L589.5 664.1 L590.5 664.2 L591.5 664.3 L592.5 664.3 L593.5 664.4 L594.5 664.4 L595.5 664.5 L596.5 664.6 L597.5 664.6 L598.5 664.7 L599.5 664.8 L600.5 664.8 L601.5 664.9 L602.5 664.9 L603.5 665.0 L604.5 665.1 L605.5 665.1 L606.5 665.2 L607.5 665.2 L608.5 665.3 L609.5 665.3 L610.5 665.4 L611.5 665.5 L612.5 665.5 L613.5 665.6 L614.5 665.6 L615.5 665.7 L616.5 665.7 L617.5 665.8 L618.5 665.9 L619.5 665.9 L620.5 666.0 L621.5 666.0 L622.5 666.1 L623.5 666.1 L624.5 666.2 L625.5 666.2 L626.5 666.3 L627.5 666.4 L628.5 666.4 L629.5 666.5 L630.5 666.5 L631.5 666.6 L632.5 666.6 L633.5 666.7 L634.5 666.7 L635.5 666.8 L636.5 666.8 L637.5 666.9 L638.5 666.9 L639.5 667.0 L640.5 667.0 L641.5 667.1 L642.5 667.1 L643.5 667.2 L644.5 667.2 L645.5 667.3 L646.5 667.3 L647.5 667.4 L648.5 667.4 L649.5 667.5 L650.5 667.5 L651.5 667.6 L652.5 667.6 L653.5 667.7 L654.5 667.7 L655.5 667.8 L656.5 667.8 L657.5 667.9 L658.5 667.9 L659.5 668.0 L660.5 668.0 L661.5 668.1 L662.5 668.1 L663.5 668.2 L664.5 668.2 L665.5 668.3 L666.5 668.3 L667.5 668.3 L668.5 668.4 L669.5 668.4 L670.5 668.5 L671.5 668.5 L672.5 668.6 L673.5 668.6 L674.5 668.7 L675.5 668.7 L676.5 668.7 L677.5 668.8 L678.5 668.8 L679.5 668.9 L680.5 668.9 L681.5 669.0 L682.5 669.0 L683.5 669.0 L684.5 669.1 L685.5 669.1 L686.5 669.2 L687.5 669.2 L688.5 669.3 L689.5 669.3 L690.5 669.3 L691.5 669.4 L692.5 669.4 L693.5 669.5 L694.5 669.5 L695.5 669.5 L696.5 669.6 L697.5 669.6 L698.5 669.7 L699.5 669.7 L700.5 669.8 L701.5 669.8 L702.5 669.8 L703.5 669.9 L704.5 669.9 L705.5 669.9 L706.5 670.0 L707.5 670.0 L708.5 670.1 L709.5 670.1 L710.5 670.1 L711.5 670.2 L712.5 670.2 L713.5 670.3 L714.5 670.3 L715.5 670.3 L716.5 670.4 L717.5 670.4 L718.5 670.4 L719.5 670.5 L720.5 670.5 L721.5 670.6 L722.5 670.6 L723.5 670.6 L724.5 670.7 L725.5 670.7 L726.5 670.7 L727.5 670.8 L728.5 670.8 L729.5 670.8 L730.5 670.9 L731.5 670.9 L732.5 670.9 L733.5 671.0 L734.5 671.0 L735.5 671.1 L736.5 671.1 L737.5 671.1 L738.5 671.2 L739.5 671.2 L740.5 671.2 L741.5 671.3 L742.5 671.3 L743.5 671.3 L744.5 671.4 L745.5 671.4 L746.5 671.4 L747.5 671.5" fill="none" stroke="#b82222" stroke-width="1"/>
<path d="M30.5 546.5 L31.5 546.7 L32.5 546.8 L33.5 546.9 L34.5 547.1 L35.5 547.2 L36.5 547.3 L37.5 547.4 L38.5 547.5 L39.5 547.6 L40.5 547.7 L41.5 547.8 L42.5 547.9 L43.5 547.9 L44.5 548.0 L45.5 548.1 L46.5 548.1 L47.5 548.2 L48.5 548.2 L49.5 548.2 L50.5 548.2 L51.5 548.2 L52.5 548.3 L53.5 548.3 L54.5 548.2 L55.5 548.2 L56.5 548.2 L57.5 548.2 L58.5 548.1 L59.5 548.1 L60.5 548.0 L61.5 548.0 L62.5 547.9 L63.5 547.9 L64.5 547.8 L65.5 547.7 L66.5 547.6 L67.5 547.5 L68.5 547.4 L69.5 547.3 L70.5 547.1 L71.5 547.0 L72.5 546.9 L73.5 546.7 L74.5 546.6 L75.5 546.4 L76.5 546.2 L77.5 546.1 L78.5 545.9 L79.5 545.7 L80.5 545.5 L81.5 545.3 L82.5 545.1 L83.5 544.9 L84.5 544.6 L85.5 544.4 L86.5 544.1 L87.5 543.9 L88.5 543.6 L89.5 543.4 L90.5 543.1 L91.5 542.8 L92.5 542.5 L93.5 542.2 L94.5 541.9 L95.5 541.6 L96.5 541.3 L97.5 541.0 L98.5 540.6 L99.5 540.3 L100.5 539.9 L101.5 539.5 L102.5 539.1 L103.5 538.7 L104.5 538.3 L105.5 537.9 L106.5 537.5 L107.5 537.0 L108.5 536.6 L109.5 536.1 L110.5 535.6 L111.5 535.1 L112.5 534.6 L113.5 534.0 L114.5 533.5 L115.5 532.9 L116.5 532.3 L117.5 531.7 L118.5 531.1 L119.5 530.5 L120.5 529.8 L121.5 529.1 L122.5 528.4 L123.5 527.7 L124.5 527.0 L125.5 526.2 L126.5 525.4 L127.5 524.6 L128.5 523.8 L129.5 523.0 L130.5 522.1 L131.5 521.2 L132.5 520.3 L133.5 519.3 L134.5 518.4 L135.5 517.4 L136.5 516.4 L137.5 515.3 L138.5 514.3 L139.5 513.2 L140.5 512.1 L141.5 511.0 L142.5 509.8 L143.5 508.6 L144.5 507.4 L145.5 506.2 L146.5 504.9 L147.5 503.6 L148.5 502.3 L149.5 501.0 L150.5 499.6 L151.5 498.3 L152.5 496.9 L153.5 495.4 L154.5 494.0 L155.5 492.5 L156.5 491.0 L157.5 489.4 L158.5 487.9 L159.5 486.3 L160.5 484.7 L161.5 483.1 L162.5 481.5 L163.5 479.8 L164.5 478.2 L165.5 476.5 L166.5 474.9 L167.5 473.2 L168.5 471.5 L169.5 469.8 L170.5 468.2 L171.5 466.5 L172.5 464.8 L173.5 463.2 L174.5 461.5 L175.5 459.9 L176.5 458.3 L177.5 456.7 L178.5 455.1 L179.5 453.5 L180.5 452.0 L181.5 450.5 L182.5 449.0 L183.5 447.6 L184.5 446.1 L185.5 444.7 L186.5 443.4 L187.5 442.1 L188.5 440.8 L189.5 439.6 L190.5 438.4 L191.5 437.2 L192.5 436.1 L193.5 435.1 L194.5 434.2 L195.5 433.2 L196.5 432.4 L197.5 431.6 L198.5 431.0 L199.5 430.3 L200.5 429.8 L201.5 429.4 L202.5 429.0 L203.5 428.7 L204.5 428.6 L205.5 428.5 L206.5 428.6 L207.5 428.7 L208.5 429.0 L209.5 429.3 L210.5 429.8 L211.5 430.4 L212.5 431.1 L213.5 431.9 L214.5 432.7 L215.5 433.7 L216.5 434.8 L217.5 436.0 L218.5 437.3 L219.5 438.7 L220.5 440.1 L221.5 441.7 L222.5 443.3 L223.5 445.1 L224.5 446.9 L225.5 448.8 L226.5 450.8 L227.5 452.9 L228.5 455.0 L229.5 457.2 L230.5 459.5 L231.5 461.8 L232.5 464.2 L233.5 466.6 L234.5 469.1 L235.5 471.6 L236.5 474.1 L237.5 476.7 L238.5 479.3 L239.5 481.9 L240.5 484.5 L241.5 487.1 L242.5 489.7 L243.5 492.4 L244.5 495.0 L245.5 497.6 L246.5 500.2 L247.5 502.8 L248.5 505.4 L249.5 507.9 L250.5 510.5 L251.5 513.0 L252.5 515.5 L253.5 517.9 L254.5 520.4 L255.5 522.8 L256.5 525.2 L257.5 527.6 L258.5 530.0 L259.5 532.3 L260.5 534.6 L261.5 536.9 L262.5 539.1 L263.5 541.3 L264.5 543.4 L265.5 545.5 L266.5 547.6 L267.5 549.7 L268.5 551.7 L269.5 553.6 L270.5 555.5 L271.5 557.4 L272.5 559.3 L273.5 561.1 L274.5 562.8 L275.5 564.6 L276.5 566.3 L277.5 567.9 L278.5 569.6 L279.5 571.2 L280.5 572.8 L281.5 574.3 L282.5 575.8 L283.5 577.3 L284.5 578.7 L285.5 580.2 L286.5 581.6 L287.5 582.9 L288.5 584.3 L289.5 585.6 L290.5 586.9 L291.5 588.1 L292.5 589.4 L293.5 590.6 L294.5 591.8 L295.5 593.0 L296.5 594.1 L297.5 595.3 L298.5 596.4 L299.5 597.5 L300.5 598.6 L301.5 599.7 L302.5 600.7 L303.5 601.7 L304.5 602.7 L305.5 603.7 L306.5 604.7 L307.5 605.7 L308.5 606.6 L309.5 607.5 L310.5 608.4 L311.5 609.3 L312.5 610.2 L313.5 611.1 L314.5 611.9 L315.5 612.8 L316.5 613.6 L317.5 614.4 L318.5 615.1 L319.5 615.9 L320.5 616.7 L321.5 617.4 L322.5 618.1 L323.5 618.8 L324.5 619.5 L325.5 620.2 L326.5 620.9 L327.5 621.5 L328.5 622.2 L329.5 622.8 L330.5 623.4 L331.5 624.0 L332.5 624.6 L333.5 625.2 L334.5 625.7 L335.5 626.3 L336.5 626.8 L337.5 627.3 L338.5 627.9 L339.5 628.4 L340.5 628.8 L341.5 629.3 L342.5 629.8 L343.5 630.3 L344.5 630.7 L345.5 631.1 L346.5 631.6 L347.5 632.0 L348.5 632.4 L349.5 632.8 L350.5 633.2 L351.5 633.6 L352.5 633.9 L353.5 634.3 L354.5 634.6 L355.5 635.0 L356.5 635.3 L357.5 635.7 L358.5 636.0 L359.5 636.3 L360.5 636.6 L361.5 636.9 L362.5 637.2 L363.5 637.5 L364.5 637.8 L365.5 638.0 L366.5 638.3 L367.5 638.6 L368.5 638.8 L369.5 639.1 L370.5 639.3 L371.5 639.6 L372.5 639.8 L373.5 640.0 L374.5 640.3 L375.5 640.5 L376.5 640.7 L377.5 640.9 L378.5 641.2 L379.5 641.4 L380.5 641.6 L381.5 641.8 L382.5 642.0 L383.5 642.2 L384.5 642.4 L385.5 642.6 L386.5 642.8 L387.5 643.0 L388.5 643.1 L389.5 643.3 L390.5 643.5 L391.5 643.7 L392.5 643.9 L393.5 644.1 L394.5 644.3 L395.5 644.4 L396.5 644.6 L397.5 644.8 L398.5 645.0 L399.5 645.1 L400.5 645.3 L401.5 645.5 L402.5 645.6 L403.5 645.8 L404.5 646.0 L405.5 646.1 L406.5 646.3 L407.5 646.5 L408.5 646.6 L409.5 646.8 L410.5 647.0 L411.5 647.1 L412.5 647.3 L413.5 647.4 L414.5 647.6 L415.5 647.7 L416.5 647.9 L417.5 648.0 L418.5 648.2 L419.5 648.3 L420.5 648.5 L421.5 648.6 L422.5 648.8 L423.5 648.9 L424.5 649.1 L425.5 649.2 L426.5 649.4 L427.5 649.5 L428.5 649.6 L429.5 649.8 L430.5 649.9 L431.5 650.1 L432.5 650.2 L433.5 650.3 L434.5 650.5 L435.5 650.6 L436.5 650.7 L437.5 650.9 L438.5 651.0 L439.5 651.1 L440.5 651.3 L441.5 651.4 L442.5 651.5 L443.5 651.7 L444.5 651.8 L445.5 651.9 L446.5 652.1 L447.5 652.2 L448.5 652.3 L449.5 652.4 L450.5 652.6 L451.5 652.7 L452.5 652.8 L453.5 652.9 L454.5 653.1 L455.5 653.2 L456.5 653.3 L457.5 653.4 L458.5 653.5 L459.5 653.7 L460.5 653.8 L461.5 653.9 L462.5 654.0 L463.5 654.1 L464.5 654.3 L465.5 654.4 L466.5 654.5 L467.5 654.6 L468.5 654.7 L469.5 654.8 L470.5 654.9 L471.5 655.1 L472.5 655.2 L473.5 655.3 L474.5 655.4 L475.5 655.5 L476.5 655.6 L477.5 655.7 L478.5 655.8 L479.5 655.9 L480.5 656.0 L481.5 656.2 L482.5 656.3 L483.5 656.4 L484.5 656.5 L485.5 656.6 L486.5 656.7 L487.5 656.8 L488.5 656.9 L489.5 657.0 L490.5 657.1 L491.5 657.2 L492.5 657.3 L493.5 657.4 L494.5 657.5 L495.5 657.6 L496.5 657.7 L497.5 657.8 L498.5 657.9 L499.5 658.0 L500.5 658.1 L501.5 658.2 L502.5 658.3 L503.5 658.4 L504.5 658.4 L505.5 658.5 L506.5 658.6 L507.5 658.7 L508.5 658.8 L509.5 658.9 L510.5 659.0 L511.5 659.1 L512.5 659.2 L513.5 659.3 L514.5 659.4 L515.5 659.4 L516.5 659.5 L517.5 659.6 L518.5 659.7 L519.5 659.8 L520.5 659.9 L521.5 660.0 L522.5 660.0 L523.5 660.1 L524.5 660.2 L525.5 660.3 L526.5 660.4 L527.5 660.5 L528.5 660.5 L529.5 660.6 L530.5 660.7 L531.5 660.8 L532.5 660.9 L533.5 660.9 L534.5 661.0 L535.5 661.1 L536.5 661.2 L537.5 661.3 L538.5 661.3 L539.5 661.4 L540.5 661.5 L541.5 661.6 L542.5 661.6 L543.5 661.7 L544.5 661.8 L545.5 661.9 L546.5 661.9 L547.5 662.0 L548.5 662.1 L549.5 662.2 L550.5 662.2 L551.5 662.3 L552.5 662.4 L553.5 662.4 L554.5 662.5 L555.5 662.6 L556.5 662.6 L557.5 662.7 L558.5 662.8 L559.5 662.9 L560.5 662.9 L561.5 663.0 L562.5 663.1 L563.5 663.1 L564.5 663.2 L565.5 663.3 L566.5 663.3 L567.5 663.4 L568.5 663.5 L569.5 663.5 L570.5 663.6 L571.5 663.6 L572.5 663.7 L573.5 663.8 L574.5 663.8 L575.5 663.9 L576.5 664.0 L577.5 664.0 L578.5 664.1 L579.5 664.1 L580.5 664.2 L581.5 664.3 L582.5 664.3 L583.5 664.4 L584.5 664.4 L585.5 664.5 L586.5 664.6 L587.5 664.6 L588.5 664.7 L589.5 664.7 L590.5 664.8 L591.5 664.9 L592.5 664.9 L593.5 665.0 L594.5 665.0 L595.5 665.1 L596.5 665.1 L597.5 665.2 L598.5 665.2 L599.5 665.3 L600.5 665.4 L601.5 665.4 L602.5 665.5 L603.5 665.5 L604.5 665.6 L605.5 665.6 L606.5 665.7 L607.5 665.7 L608.5 665.8 L609.5 665.8 L610.5 665.9 L611.5 665.9 L612.5 666.0 L613.5 666.0 L614.5 666.1 L615.5 666.1 L616.5 666.2 L617.5 666.2 L618.5 666.3 L619.5 666.3 L620.5 666.4 L621.5 666.4 L622.5 666.5 L623.5 666.5 L624.5 666.6 L625.5 666.6 L626.5 666.7 L627.5 666.7 L628.5 666.8 L629.5 666.8 L630.5 666.9 L631.5 666.9 L632.5 667.0 L633.5 667.0 L634.5 667.1 L635.5 667.1 L636.5 667.2 L637.5 667.2 L638.5 667.2 L639.5 667.3 L640.5 667.3 L641.5 667.4 L642.5 667.4 L643.5 667.5 L644.5 667.5 L645.5 667.6 L646.5 667.6 L647.5 667.6 L648.5 667.7 L649.5 667.7 L650.5 667.8 L651.5 667.8 L652.5 667.9 L653.5 667.9 L654.5 667.9 L655.5 668.0 L656.5 668.0 L657.5 668.1 L658.5 668.1 L659.5 668.2 L660.5 668.2 L661.5 668.2 L662.5 668.3 L663.5 668.3 L664.5 668.4 L665.5 668.4 L666.5 668.5 L667.5 668.5 L668.5 668.5 L669.5 668.6 L670.5 668.6 L671.5 668.7 L672.5 668.7 L673.5 668.7 L674.5 668.8 L675.5 668.8 L676.5 668.9 L677.5 668.9 L678.5 668.9 L679.5 669.0 L680.5 669.0 L681.5 669.1 L682.5 669.1 L683.5 669.1 L684.5 669.2 L685.5 669.2 L686.5 669.3 L687.5 669.3 L688.5 669.3 L689.5 669.4 L690.5 669.4 L691.5 669.5 L692.5 669.5 L693.5 669.5 L694.5 669.6 L695.5 669.6 L696.5 669.6 L697.5 669.7 L698.5 669.7 L699.5 669.8 L700.5 669.8 L701.5 669.8 L702.5 669.9 L703.5 669.9 L704.5 670.0 L705.5 670.0 L706.5 670.0 L707.5 670.1 L708.5 670.1 L709.5 670.2 L710.5 670.2 L711.5 670.2 L712.5 670.3 L713.5 670.3 L714.5 670.3 L715.5 670.4 L716.5 670.4 L717.5 670.5 L718.5 670.5 L719.5 670.5 L720.5 670.6 L721.5 670.6 L722.5 670.7 L723.5 670.7 L724.5 670.7 L725.5 670.8 L726.5 670.8 L727.5 670.8 L728.5 670.9 L729.5 670.9 L730.5 671.0 L731.5 671.0 L732.5 671.0 L733.5 671.1 L734.5 671.1 L735.5 671.2 L736.5 671.2 L737.5 671.2 L738.5 671.3 L739.5 671.3 L740.5 671.4 L741.5 671.4 L742.5 671.4 L743.5 671.5 L744.5 671.5 L745.5 671.6 L746.5 671.6 L747.5 671.6" fill="none" stroke="#f6f67c" stroke-width="1"/>
<g font-family="Liberation Sans, Arial, sans-serif" font-size="12.4px" fill="#fff">
<text transform="translate(6.4 663) scale(0.877 1)">1</text>
<text transform="translate(6.4 648) scale(0.877 1)">2</text>
<text transform="translate(6.4 632) scale(0.877 1)">3</text>
<text transform="translate(6.4 617) scale(0.877 1)">4</text>
<text transform="translate(6.4 601) scale(0.877 1)">5</text>
<text transform="translate(6.4 585) scale(0.877 1)">6</text>
<text transform="translate(6.4 570) scale(0.877 1)">7</text>
<text transform="translate(6.4 554) scale(0.877 1)">8</text>
<text transform="translate(6.4 539) scale(0.877 1)">9</text>
<text transform="translate(6.4 523) scale(0.877 1)">10</text>
<text transform="translate(6.4 507) scale(0.877 1)">11</text>
<text transform="translate(6.4 492) scale(0.877 1)">12</text>
<text transform="translate(6.4 476) scale(0.877 1)">13</text>
<text transform="translate(6.4 461) scale(0.877 1)">14</text>
<text transform="translate(6.4 445) scale(0.877 1)">15</text>
<text transform="translate(6.4 429) scale(0.877 1)">16</text>
<text transform="translate(6.4 414) scale(0.877 1)">17</text>
<text transform="translate(6.4 398) scale(0.877 1)">18</text>
<text transform="translate(6.4 383) scale(0.877 1)">19</text>
<text transform="translate(6.4 367) scale(0.877 1)">20</text>
<text transform="translate(6.4 351) scale(0.877 1)">21</text>
<text transform="translate(6.4 336) scale(0.877 1)">22</text>
<text transform="translate(6.4 320) scale(0.877 1)">23</text>
<text transform="translate(6.4 305) scale(0.877 1)">24</text>
<text transform="translate(6.4 289) scale(0.877 1)">25</text>
<text transform="translate(6.4 273) scale(0.877 1)">26</text>
<text transform="translate(6.4 258) scale(0.877 1)">27</text>
<text transform="translate(6.4 242) scale(0.877 1)">28</text>
<text transform="translate(6.4 227) scale(0.877 1)">29</text>
<text transform="translate(6.4 211) scale(0.877 1)">30</text>
<text transform="translate(6.4 195) scale(0.877 1)">31</text>
<text transform="translate(6.4 180) scale(0.877 1)">32</text>
<text transform="translate(6.4 164) scale(0.877 1)">33</text>
<text transform="translate(6.4 149) scale(0.877 1)">34</text>
<text transform="translate(6.4 133) scale(0.877 1)">35</text>
<text transform="translate(6.4 117) scale(0.877 1)">36</text>
<text transform="translate(6.4 102) scale(0.877 1)">37</text>
<text transform="translate(6.4 86) scale(0.877 1)">38</text>
<text transform="translate(6.4 71) scale(0.877 1)">39</text>
<text transform="translate(35.8 686) scale(0.877 1)">20</text>
<text transform="translate(234.6 686) scale(0.877 1)" text-anchor="middle">50</text>
<text transform="translate(389.0 686) scale(0.877 1)" text-anchor="middle">100</text>
<text transform="translate(543.4 686) scale(0.877 1)" text-anchor="middle">200</text>
<text transform="translate(743.6 686) scale(0.877 1)" text-anchor="end">500</text>
</g>
</svg>
<div id="teal" class="abs"></div><div id="band" class="abs"></div>
<div id="wm" class="abs">www.Lautsprecherforum.eu © Geist1 , vom Thu 19. Oct 2017, 10:11</div>
</body></html>
